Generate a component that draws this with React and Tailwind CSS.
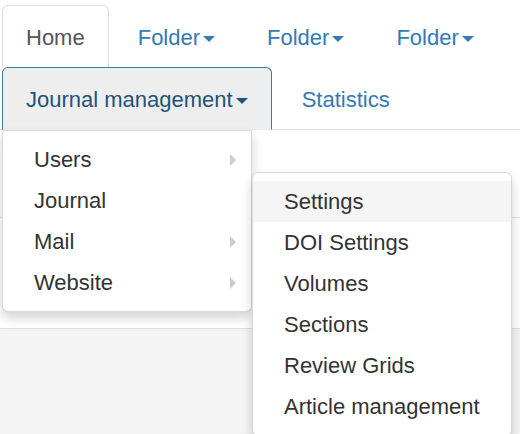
import React from "react";

const topTabs = ["Folder", "Folder", "Folder"];
const menu = [
    { label: "Users", sub: true },
    { label: "Journal", sub: false },
    { label: "Mail", sub: true },
    { label: "Website", sub: true }
];
const subMenu = ["Settings", "DOI Settings", "Volumes", "Sections", "Review Grids", "Article management"];

function Caret() {
    return <span className="inline-block ml-[3px] align-middle w-0 h-0 border-t-[6px] border-t-current border-x-[6px] border-x-transparent"></span>;
}

export default function App() {
    return (
        <div className="relative min-h-[434px] flex flex-col bg-white text-[22px] text-[#333] overflow-hidden" style={{ fontFamily: "'Liberation Sans', Arial, sans-serif" }}>
            {/* tabs */}
            <ul className="flex flex-wrap pt-[5px] border-b border-[#ddd]">
                <li className="ml-[2px] mb-[-1px]">
                    <a className="block px-[23px] pt-[16px] pb-[14px] leading-[31px] border border-[#ddd] border-b-transparent rounded-t-[6px] text-[#555] bg-white">Home</a>
                </li>
                {topTabs.map((t, i) => (
                    <li key={i} className="ml-[3px] mb-[-1px]">
                        <a className="block pl-[25px] pr-[22px] pt-[16px] pb-[14px] leading-[31px] border border-transparent text-[#337ab7]">
                            {t}<Caret />
                        </a>
                    </li>
                ))}
                <li className="ml-[2px] mb-[-1px] relative">
                    <a className="block px-[23px] pt-[16px] pb-[14px] leading-[31px] border border-[#337ab7] border-b-transparent rounded-t-[6px] bg-[#eee] text-[#23527c]">
                        Journal management<Caret />
                    </a>
                </li>
                <li className="ml-[3px] mb-[-1px]">
                    <a className="block pl-[26px] pr-[23px] pt-[16px] pb-[14px] leading-[31px] border border-transparent text-[#337ab7]">Statistics</a>
                </li>
            </ul>

            {/* page content behind the menus */}
            <div className="h-[87px]"></div>
            <div className="h-[111px] border-t border-[#dbe3ec]"></div>
            <div className="flex-1 border-t border-[#ddd] bg-[#f4f4f4]"></div>

            {/* dropdown */}
            <ul className="absolute left-[2px] top-[130px] w-[250px] py-[8px] bg-white border border-black/15 rounded-b-[6px] shadow-[0_6px_12px_rgba(0,0,0,0.175)]">
                {menu.map((m) => (
                    <li key={m.label} className="flex items-center justify-between pl-[31px] pr-[15px] h-[41px] pt-[1px] leading-[40px]">
                        <span>{m.label}</span>
                        {m.sub && <span className="w-0 h-0 border-l-[6px] border-l-[#ccc] border-y-[6px] border-y-transparent"></span>}
                    </li>
                ))}
            </ul>

            {/* submenu */}
            <ul className="absolute left-[252px] top-[172px] w-[260px] pt-[8px] pb-[8px] bg-white border border-black/15 rounded-[6px] shadow-[0_6px_12px_rgba(0,0,0,0.175)]">
                {subMenu.map((s, i) => (
                    <li key={s} className={"pl-[31px] h-[41px] leading-[41px] " + (i === 0 ? "bg-[#f5f5f5]" : "")}>{s}</li>
                ))}
            </ul>
        </div>
    );
}
